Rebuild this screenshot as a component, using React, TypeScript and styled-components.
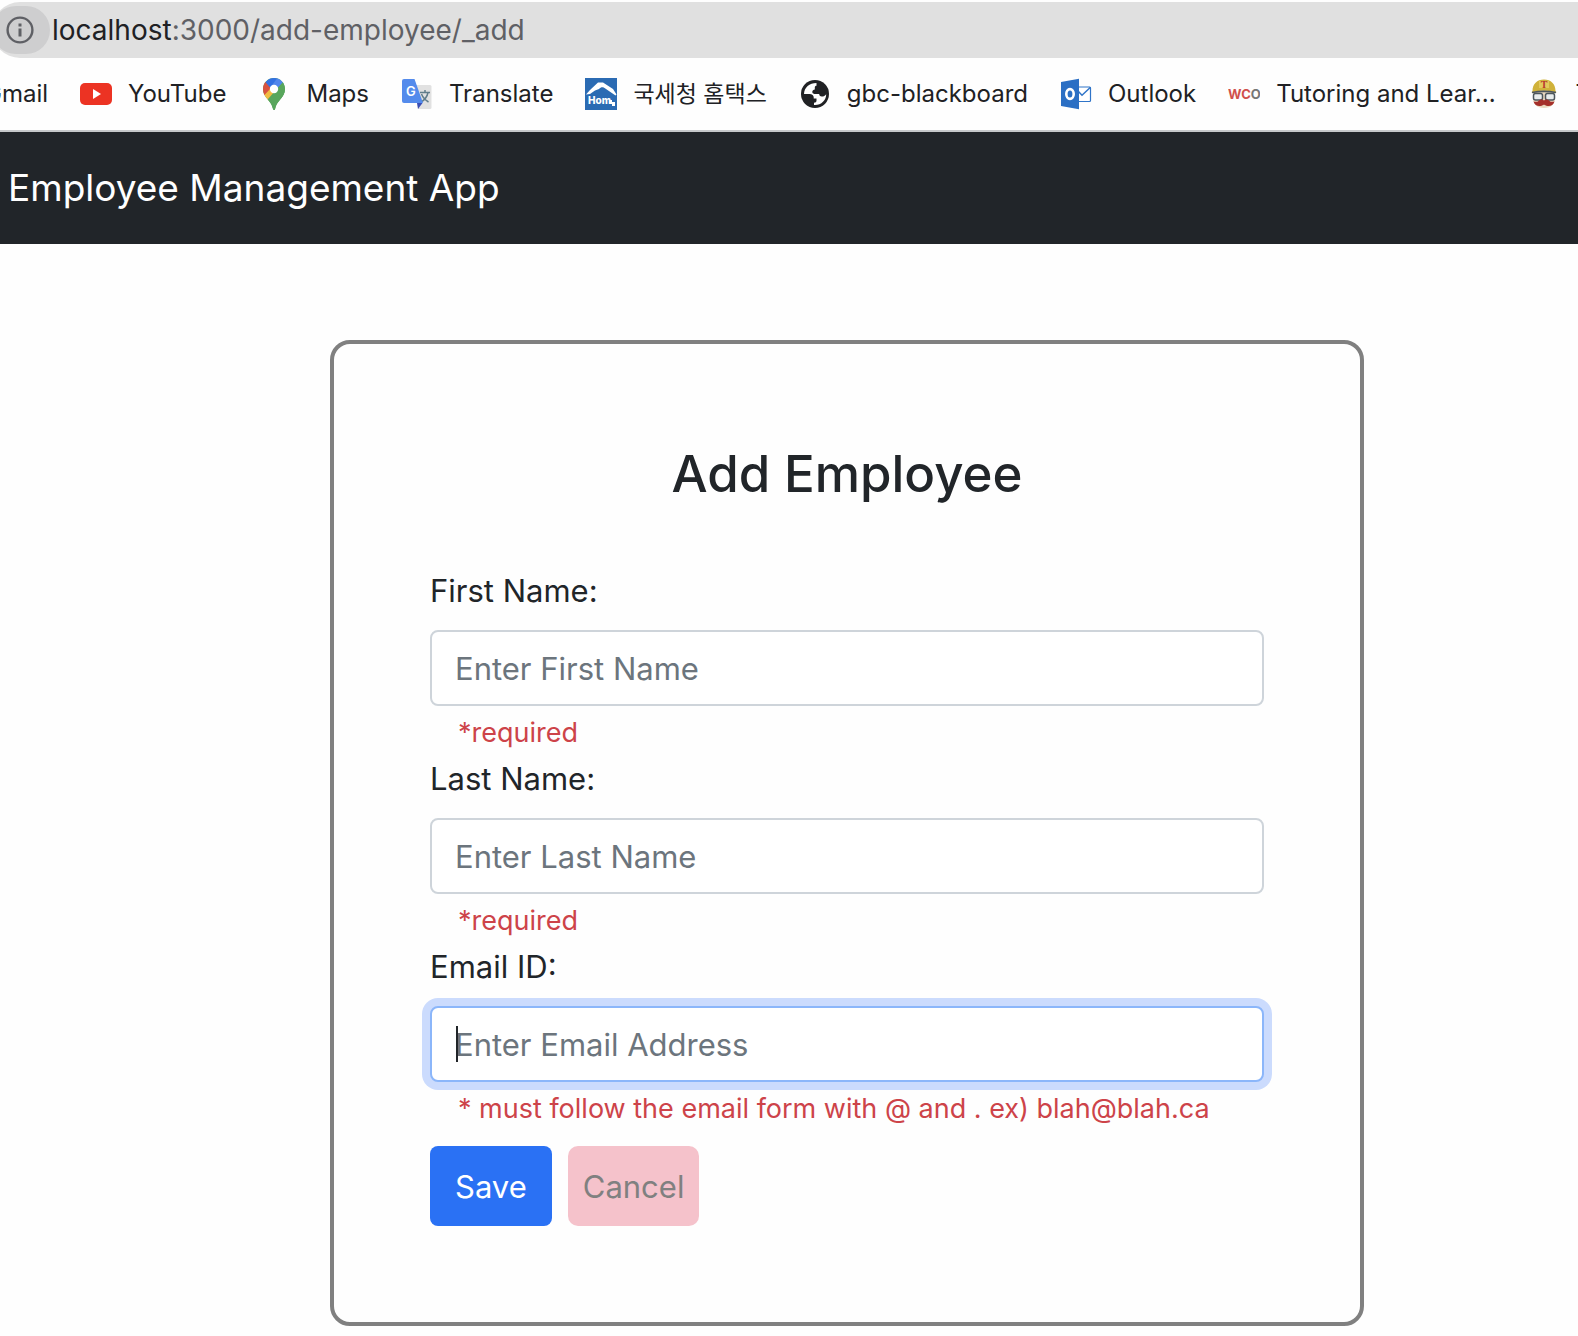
import React from "react";
import styled, { createGlobalStyle, css } from "styled-components";

const GlobalStyle = createGlobalStyle`
  *, *::before, *::after { box-sizing: border-box; }
  body {
    margin: 0;
    background: #fefefe;
    color: #212529;
    font-family: Inter, "Noto Sans CJK KR", sans-serif;
    font-size: 31px;
    line-height: 48px;
    overflow-x: hidden;
  }
`;

/* ---------- Browser chrome ---------- */

const AddressBar = styled.div`
  display: flex;
  align-items: center;
  height: 56px;
  margin-top: 2px;
  margin-left: -8px;
  background: #e0e0e0;
  border-radius: 28px 0 0 28px;
`;

const SiteInfo = styled.button`
  display: flex;
  align-items: center;
  justify-content: flex-end;
  width: 58px;
  height: 48px;
  padding: 0 12px 0 0;
  border: 0;
  border-radius: 24px;
  background: #cececf;
`;

const Url = styled.span`
  margin-left: 2px;
  font-size: 28px;
  color: #5f6065;
  white-space: nowrap;
`;

const Host = styled.span`
  color: #202124;
`;

const BookmarksBar = styled.nav`
  display: flex;
  align-items: center;
  gap: 32px;
  height: 74px;
  border-bottom: 2px solid #c6c8ca;
  overflow: hidden;
`;

const Bookmark = styled.a<{ $cut?: boolean }>`
  display: flex;
  flex: none;
  align-items: center;
  gap: 16px;
  color: #202124;
  font-size: 24px;
  text-decoration: none;
  white-space: nowrap;
  ${(p) => p.$cut && css`margin-left: -16px;`}
  &:lang(ko) {
    font-size: 23px;
  }
`;

const Icon = styled.svg`
  flex: none;
  width: 32px;
  height: 32px;
`;

/* ---------- Application ---------- */

const Header = styled.header`
  display: flex;
  align-items: center;
  height: 112px;
  padding: 0 8px;
  background: #212529;
`;

const Brand = styled.a`
  color: #fff;
  font-size: 37px;
  text-decoration: none;
`;

const Main = styled.main`
  padding: 96px 214px 10px 330px;
`;

const Card = styled.form`
  display: flex;
  flex-direction: column;
  padding: 96px;
  border: 4px solid #808080;
  border-radius: 20px;
`;

const Title = styled.h3`
  margin: 0 0 58px;
  font-size: 51px;
  font-weight: 500;
  line-height: 68px;
  text-align: center;
`;

const Field = styled.div`
  display: flex;
  flex-direction: column;
`;

const Label = styled.label`
  margin-bottom: 14px;
  line-height: 50px;
`;

const InputWrap = styled.div`
  position: relative;
  display: flex;
`;

const Input = styled.input<{ $active?: boolean }>`
  width: 100%;
  height: 76px;
  padding: 0 23px;
  border: 2px solid #ced4da;
  border-radius: 8px;
  outline: 0;
  background: #fff;
  color: #212529;
  caret-color: transparent;
  font: inherit;
  &::placeholder {
    color: #6c757d;
    opacity: 1;
  }
  ${(p) =>
    p.$active &&
    css`
      border-color: #8bb6fa;
      box-shadow: 0 0 0 8px #cbdbfd;
    `}
`;

const Caret = styled.span`
  position: absolute;
  top: 20px;
  left: 26px;
  width: 2px;
  height: 36px;
  background: #212529;
`;

const Hint = styled.div`
  height: 48px;
  padding: 6px 28px 0;
  color: #cd4349;
  font-size: 27px;
  line-height: 42px;
`;

const Actions = styled.div`
  display: flex;
  gap: 16px;
  margin-top: 16px;
`;

const Button = styled.button<{ $variant: "save" | "cancel" }>`
  height: 80px;
  border: 0;
  font: inherit;
  ${(p) =>
    p.$variant === "save"
      ? css`
          padding: 2px 25px 0;
          border-radius: 8px;
          background: #2a71f4;
          color: #fff;
        `
      : css`
          padding: 2px 15px 0;
          border-radius: 10px;
          background: #f5c2cb;
          color: #808080;
        `}
`;

/* ---------- Icons ---------- */

const InfoIcon = () => (
  <Icon viewBox="0 0 32 32" aria-hidden="true">
    <circle cx="14" cy="16" r="12.4" fill="none" stroke="#5f6065" strokeWidth="2.4" />
    <path d="M12.500 9.500h3v3h-3zM12.500 14.500h3v8h-3z" fill="#5f6065" />
  </Icon>
);

const YouTubeIcon = () => (
  <Icon viewBox="0 0 32 32" aria-hidden="true">
    <rect x="0" y="5" width="32" height="22" rx="5" fill="#ec3323" />
    <path d="M13 11v10l8-5z" fill="#fff" />
  </Icon>
);

const MapsIcon = () => (
  <Icon viewBox="0 0 32 32" aria-hidden="true">
    <defs>
      <clipPath id="pin">
        <path d="M16 0C9.900 0 5 4.900 5 11c0 4.200 1.900 7 4.600 10.300C12.500 24.800 14 27 14.800 30.400c.3 1.300.6 1.600 1.200 1.600s.9-.3 1.200-1.600c.8-3.400 2.300-5.600 5.200-9.100C25.100 18 27 15.200 27 11 27 4.900 22.100 0 16 0z" />
      </clipPath>
    </defs>
    <g clipPath="url(#pin)">
      <rect width="32" height="32" fill="#58a65c" />
      <path d="M3 17L12.900 7.900 19.500 14 8.700 24H3z" fill="#f1bc42" />
      <path d="M3 3.500h4.500L14 9 4.500 19H3z" fill="#d85140" />
      <path d="M7.300 4L12 0h8l-7.500 10z" fill="#3371e3" />
      <path d="M19.500 0L30 0v5.500h-5.500L16 14l-3.500-5z" fill="#5186ec" />
      <path d="M24.500 4.500L30 2v30H16L8.700 22.500z" fill="#58a65c" />
    </g>
    <circle cx="16" cy="11" r="4.200" fill="#fff" />
  </Icon>
);

const TranslateIcon = () => (
  <Icon viewBox="0 0 32 32" aria-hidden="true">
    <path d="M13 7h16a1.500 1.500 0 0 1 1.500 1.500v21a1.500 1.500 0 0 1-1.500 1.500H17z" fill="#e1e1e1" />
    <path d="M16 25h5.500L17 31z" fill="#3b4fb5" />
    <path d="M19 14.500h10M24 12v2.500M27 14.500c-.8 4-3.500 7.500-7 9.500M20.500 16c1.200 3.200 3.800 6 7 8" fill="none" stroke="#607d8b" strokeWidth="1.500" />
    <path d="M3 1h10.500L22 25H3a2 2 0 0 1-2-2V3a2 2 0 0 1 2-2z" fill="#548bec" />
    <text x="5" y="18" fontFamily="Inter, sans-serif" fontWeight="600" fontSize="13" fill="#fff">G</text>
  </Icon>
);

const HomeTaxIcon = () => (
  <Icon viewBox="0 0 32 32" aria-hidden="true">
    <rect width="32" height="32" fill="#2b6bb3" />
    <path d="M1 16.500L5 12 13 4.500h5L28 11l3.500 5.500-1 1L21 11c-3-2.500-5-2-7 0l-4 1.500-5 3.500z" fill="#fff" />
    <text x="3" y="26" fontFamily="Inter, sans-serif" fontWeight="800" fontSize="10" fill="#fff">Hom</text>
    <path d="M24 22h3v2h3v4h-3v-2h-3z" fill="#fff" />
  </Icon>
);

const GlobeIcon = () => (
  <Icon viewBox="0 0 32 32" aria-hidden="true">
    <circle cx="16" cy="16" r="14" fill="#202124" />
    <path
      d="M17.500 5C10.500 5 5 9.500 5 16h5.500c2.600 0 4.200 1.400 4.200 3.200v1.300h2.800v2.200c0 1.300-1 2-2.500 2v2.200c6.800.6 12.200-4.500 12.200-10.700-1.200 1.800-2.500 2.300-4.400 2.300-1.800 0-2.600-1-2.600-2.500h-3.400c-2.200 0-3.500-.8-3.500-2.100 0-1.400 1.200-2 2.500-2.300V9.500c0-1.200.7-1.800 1.700-1.800z"
      fill="#fff"
    />
  </Icon>
);

const OutlookIcon = () => (
  <Icon viewBox="0 0 32 32" aria-hidden="true">
    <rect x="17" y="9" width="13.500" height="14.500" rx="1" fill="#fff" stroke="#2f74c8" strokeWidth="1.200" />
    <path d="M18 13l4 4.200 8.500-8" fill="none" stroke="#2f74c8" strokeWidth="1.500" />
    <path d="M1 4l18-3.300v30.600L1 28z" fill="#2b6fc4" />
    <ellipse cx="10" cy="16" rx="3.700" ry="4.900" fill="none" stroke="#fff" strokeWidth="2.600" />
  </Icon>
);

const WcoIcon = () => (
  <Icon viewBox="0 0 32 32" aria-hidden="true">
    <text x="0" y="21" fontFamily="Inter, sans-serif" fontWeight="700" fontSize="13" fill="#d0504c">
      WC<tspan fill="#777">O</tspan>
    </text>
  </Icon>
);

const TravisIcon = () => (
  <Icon viewBox="0 0 32 32" aria-hidden="true">
    <path d="M5 12h22v8c0 6-4 10-11 10S5 26 5 20z" fill="#ead9c0" />
    <path d="M4.500 13C4.500 6 9 1.500 16 1.500S27.500 6 27.500 13l1 1.500c-8-2.500-17-2.500-25 0z" fill="#d0b23a" />
    <path d="M11 3h10v7H11z" fill="#e2c95c" />
    <text x="16" y="10" textAnchor="middle" fontFamily="Liberation Serif, serif" fontWeight="700" fontSize="10" fill="#b8352c">T</text>
    <path d="M4 14.500c8-1.500 16-1.500 24 0" fill="none" stroke="#4c565c" strokeWidth="1.500" />
    <rect x="5.500" y="15.500" width="9" height="6.500" rx="2" fill="#e8ecec" stroke="#4c565c" strokeWidth="1.500" />
    <rect x="17.500" y="15.500" width="9" height="6.500" rx="2" fill="#e8ecec" stroke="#4c565c" strokeWidth="1.500" />
    <path d="M16 22.500c-2-1.500-4-1-5.500.5-1.200 1-3 1-5 .5 1 3.500 4 5 7 4.500 1.800-.3 2.700-1 3.500-1.500.8.500 1.700 1.200 3.500 1.500 3 .5 6-1 7-4.500-2 .5-3.800.5-5-.5-1.500-1.500-3.500-2-5.500-.5z" fill="#a5302b" />
  </Icon>
);

const bookmarks: { label: string; icon: React.ReactNode; lang?: string }[] = [
  { label: "YouTube", icon: <YouTubeIcon /> },
  { label: "Maps", icon: <MapsIcon /> },
  { label: "Translate", icon: <TranslateIcon /> },
  { label: "국세청 홈택스", icon: <HomeTaxIcon />, lang: "ko" },
  { label: "gbc-blackboard", icon: <GlobeIcon /> },
  { label: "Outlook", icon: <OutlookIcon /> },
  { label: "Tutoring and Lear...", icon: <WcoIcon /> },
  { label: "T", icon: <TravisIcon /> },
];

const fields = [
  { id: "firstName", label: "First Name:", placeholder: "Enter First Name", hint: "*required" },
  { id: "lastName", label: "Last Name:", placeholder: "Enter Last Name", hint: "*required" },
  {
    id: "emailId",
    label: "Email ID:",
    placeholder: "Enter Email Address",
    hint: "* must follow the email form with @ and . ex) blah@blah.ca",
    active: true,
  },
];

export default function App() {
  return (
    <>
      <GlobalStyle />
      <AddressBar>
        <SiteInfo type="button" aria-label="View site information">
          <InfoIcon />
        </SiteInfo>
        <Url>
          <Host>localhost</Host>:3000/add-employee/_add
        </Url>
      </AddressBar>
      <BookmarksBar>
        <Bookmark href="#" $cut>Gmail</Bookmark>
        {bookmarks.map((b) => (
          <Bookmark key={b.label} href="#" lang={b.lang}>
            {b.icon}
            {b.label}
          </Bookmark>
        ))}
      </BookmarksBar>
      <Header>
        <Brand href="#">Employee Management App</Brand>
      </Header>
      <Main>
        <Card onSubmit={(e) => e.preventDefault()}>
          <Title>Add Employee</Title>
          {fields.map((f) => (
            <Field key={f.id}>
              <Label htmlFor={f.id}>{f.label}</Label>
              <InputWrap>
                <Input id={f.id} name={f.id} placeholder={f.placeholder} $active={f.active} />
                {f.active && <Caret />}
              </InputWrap>
              <Hint>{f.hint}</Hint>
            </Field>
          ))}
          <Actions>
            <Button type="submit" $variant="save">Save</Button>
            <Button type="button" $variant="cancel">Cancel</Button>
          </Actions>
        </Card>
      </Main>
    </>
  );
}
